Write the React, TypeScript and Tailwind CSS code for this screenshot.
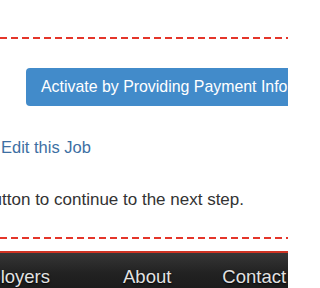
import React from 'react';

const dashed =
  'h-[2px] w-full bg-[repeating-linear-gradient(90deg,#e4352a_0_7px,transparent_7px_11px)]';

export default function App() {
  return (
    <div className="w-[288px] h-[288px] overflow-hidden bg-white font-['Liberation_Sans',Arial,sans-serif] text-[16.5px] text-[#333]">
      {/* Content area */}
      <div className="pt-[37px]">
        <div className={dashed} />

        <div className="mt-[29px] ml-[26px]">
          <button className="h-[38px] whitespace-nowrap rounded-[4px] bg-[#428bca] pl-[15px] pr-[15px] text-[15.9px] text-white">
            Activate by Providing Payment Info
          </button>
        </div>

        <div className="mt-[30px] h-[22px] leading-[22px] ml-[1px]">
          <a href="#" className="text-[#3d6fa3]">
            Edit this Job
          </a>
        </div>

        {/* sentence is cut at the left edge, so anchor its end */}
        <div className="mt-[31px] flex w-[244px] justify-end">
          <p className="shrink-0 h-[22px] leading-[22px] whitespace-nowrap text-[17px]">
            Click the button to continue to the next step.
          </p>
        </div>
      </div>

      <div className="mt-[26px]">
        <div className={dashed} />
      </div>

      {/* Footer */}
      <div className="mt-[12px] h-[2px] bg-[#cf3323]" />
      <nav className="h-[40px] bg-gradient-to-b from-[#363636] via-[#222] to-[#1a1a1a] pt-[12px]">
        <ul className="flex h-[24px] items-center whitespace-nowrap text-[18.5px] text-[#e2e2e2] [text-shadow:0_1px_2px_#000]">
          <li className="flex w-[50px] shrink-0 justify-end">
            <span className="shrink-0">Employers</span>
          </li>
          <li className="ml-[73px]">About</li>
          <li className="ml-[51px]">Contact</li>
        </ul>
      </nav>
    </div>
  );
}
